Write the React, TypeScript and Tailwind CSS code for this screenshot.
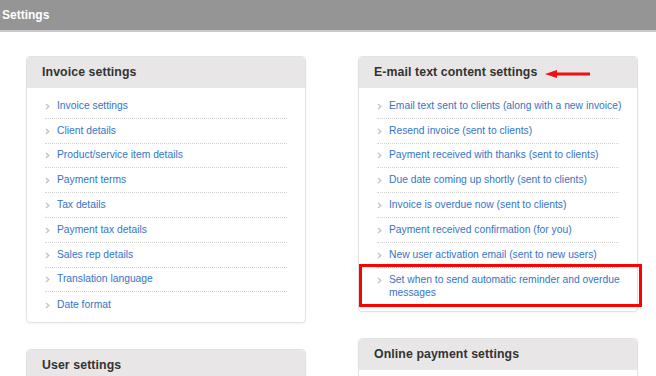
import React from "react";

const invoiceItems = [
  "Invoice settings",
  "Client details",
  "Product/service item details",
  "Payment terms",
  "Tax details",
  "Payment tax details",
  "Sales rep details",
  "Translation language",
  "Date format",
];

const emailItems = [
  "Email text sent to clients (along with a new invoice)",
  "Resend invoice (sent to clients)",
  "Payment received with thanks (sent to clients)",
  "Due date coming up shortly (sent to clients)",
  "Invoice is overdue now (sent to clients)",
  "Payment received confirmation (for you)",
  "New user activation email (sent to new users)",
];

function Chevron() {
  return (
    <svg width="5" height="7" viewBox="0 0 5 7" className="shrink-0 mt-[1px]">
      <path d="M1 1 L3.8 3.5 L1 6" fill="none" stroke="#c2c2c2" strokeWidth="1.3" />
    </svg>
  );
}

function Row({ label, last }: { label: string; last?: boolean }) {
  return (
    <li
      className={`flex items-center gap-[7px] h-[24.8px] whitespace-nowrap ${
        last ? "" : "border-b border-dotted border-[#d2d2d2]"
      }`}
    >
      <Chevron />
      <a className="text-[#3474c6] text-[10.3px] leading-none cursor-pointer">{label}</a>
    </li>
  );
}

function Card({
  title,
  children,
  extra,
}: {
  title: string;
  children?: React.ReactNode;
  extra?: React.ReactNode;
}) {
  return (
    <div className="w-[280px] rounded-[4px] border border-[#e2e2e2] bg-white shadow-[0_1px_2px_rgba(0,0,0,0.04)]">
      <div className="h-[31px] rounded-t-[4px] bg-[#e8e6e6] flex items-center pl-[15px]">
        <h2 className="text-[12.3px] font-bold text-[#333] tracking-[0.1px]">{title}</h2>
        {extra}
      </div>
      {children}
    </div>
  );
}

export default function App() {
  return (
    <div
      className="h-[376px] overflow-hidden bg-white"
      style={{ fontFamily: '"Liberation Sans", Arial, sans-serif' }}
    >
      <div className="h-[32px] bg-[#959595] border-b-[2px] border-[#c9c9c9] flex items-center pl-[2px]">
        <span className="text-white font-bold text-[12px]">Settings</span>
      </div>

      <div className="flex gap-[52px] pl-[26px] pt-[24px]">
        <div className="flex flex-col">
          <Card title="Invoice settings">
            <ul className="px-[18px] pt-[6px] pb-[5px]">
              {invoiceItems.map((it, i) => (
                <Row key={it} label={it} last={i === invoiceItems.length - 1} />
              ))}
            </ul>
          </Card>
          <div className="mt-[26px]">
            <Card title="User settings">
              <div className="h-[60px]" />
            </Card>
          </div>
        </div>

        <div className="flex flex-col">
          <Card
            title="E-mail text content settings"
            extra={
              <svg width="46" height="10" viewBox="0 0 46 10" className="ml-[8px] mt-[2px]">
                <path d="M10 5 L45 5" stroke="#ee1111" strokeWidth="3" />
                <path d="M0 5 L12 1 L12 9 Z" fill="#ee1111" />
              </svg>
            }
          >
            <ul className="px-[18px] pt-[6px] pb-[5px]">
              {emailItems.map((it) => (
                <Row key={it} label={it} />
              ))}
              <li className="relative flex items-start gap-[7px] pt-[5px] pb-[6px] mr-[-8px]">
                <span className="mt-[3px]">
                  <Chevron />
                </span>
                <a className="text-[#3474c6] text-[10.3px] leading-[13.7px] cursor-pointer">
                  Set when to send automatic reminder and overdue messages
                </a>
                <div className="absolute top-[-4px] left-[-18px] right-[-15px] bottom-[-1px] border-[3px] border-[#ff0000] pointer-events-none" />
              </li>
            </ul>
          </Card>
          <div className="mt-[26px]">
            <Card title="Online payment settings">
              <div className="h-[60px]" />
            </Card>
          </div>
        </div>
      </div>
    </div>
  );
}
